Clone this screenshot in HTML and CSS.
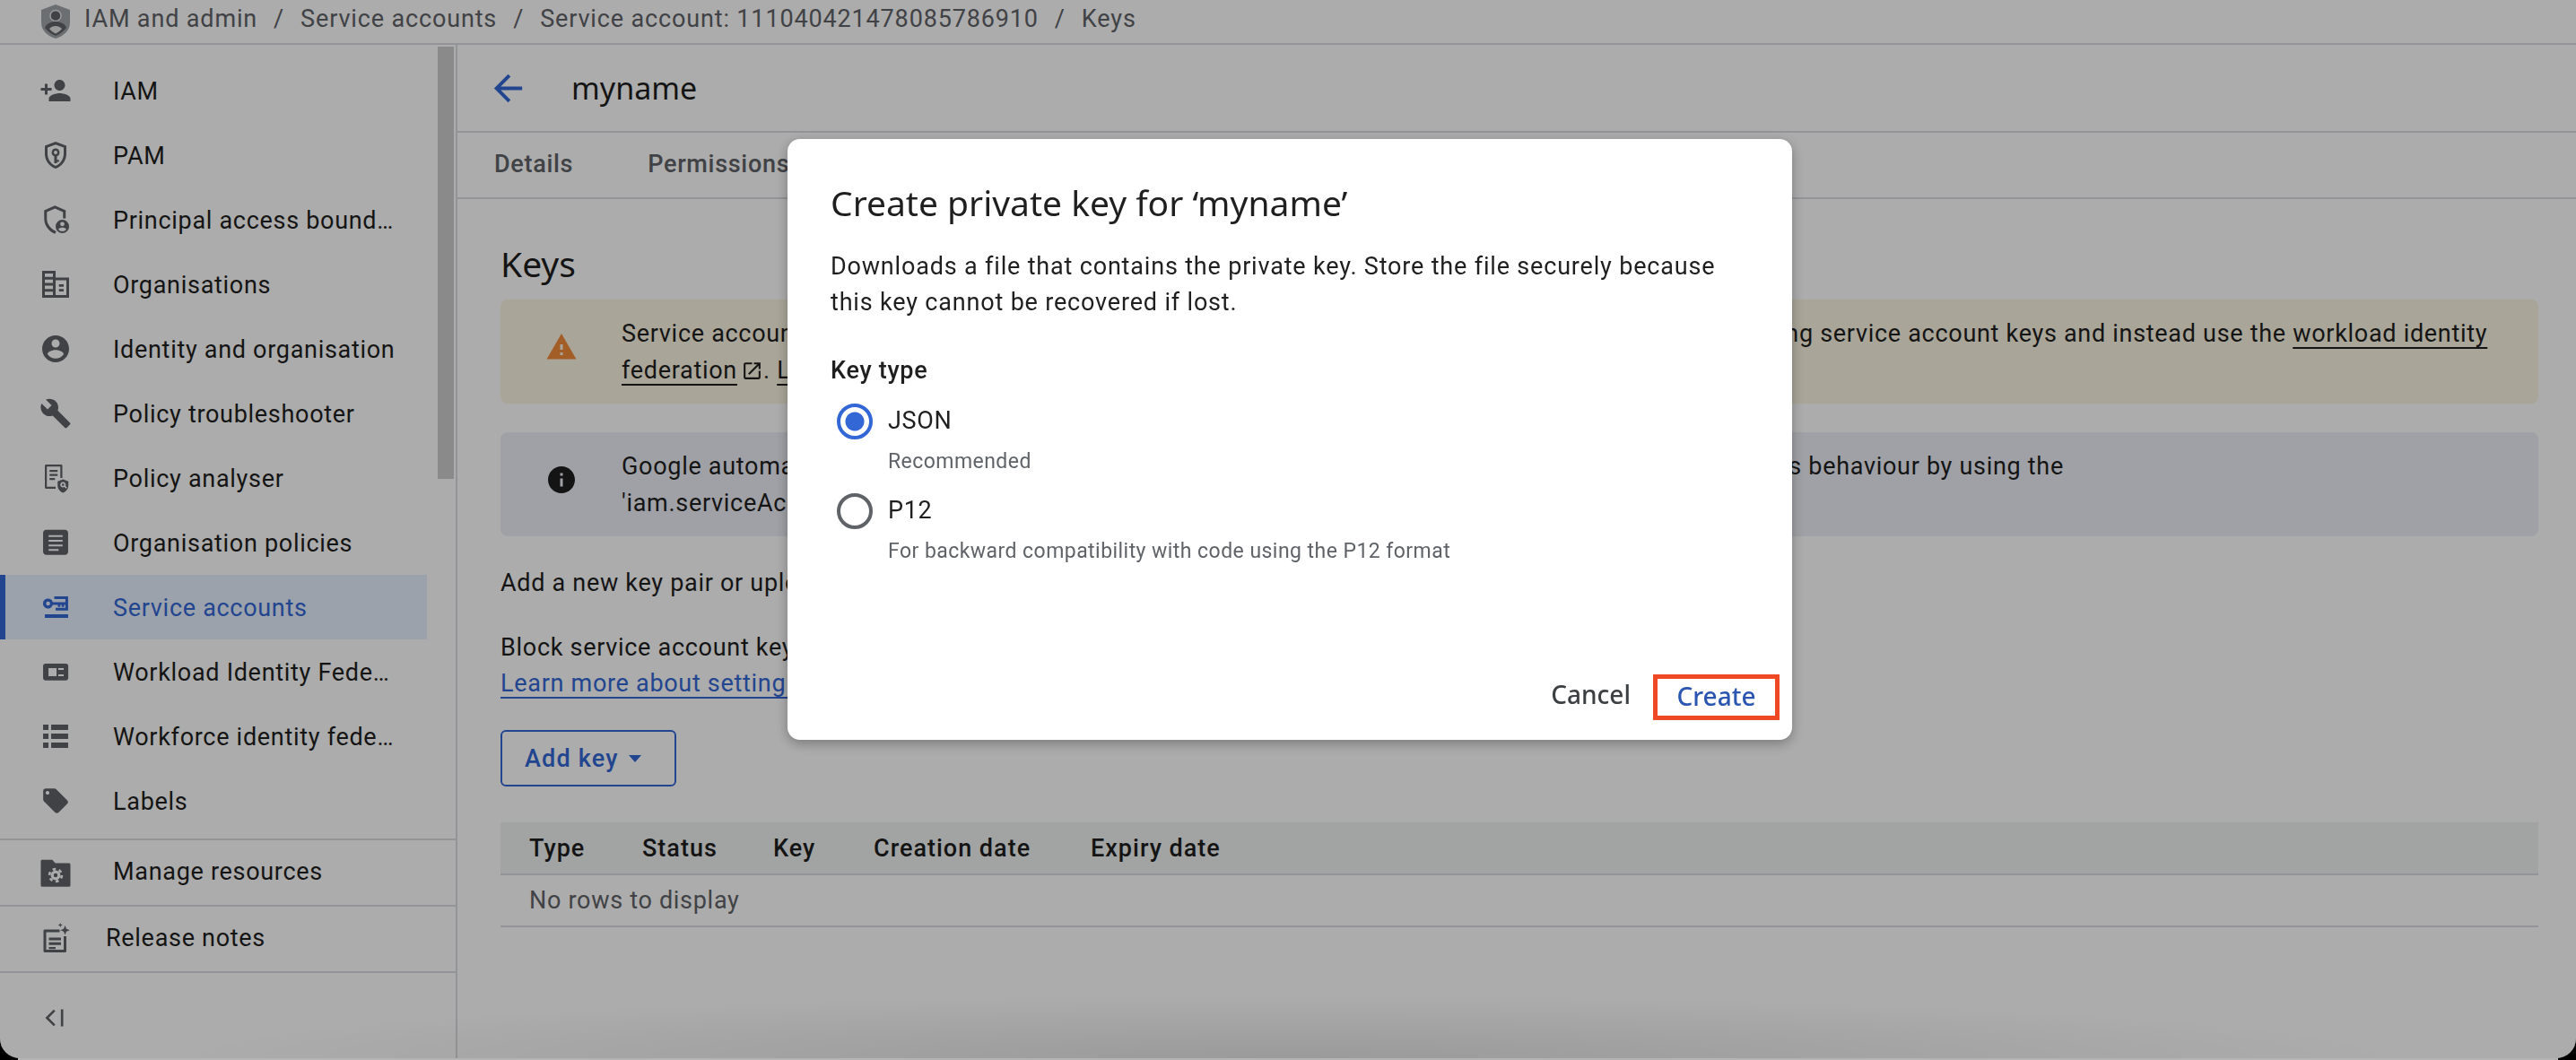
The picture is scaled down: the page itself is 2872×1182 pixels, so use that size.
FILE: index.html
```html
<!DOCTYPE html>
<html lang="en">
<head>
  <meta charset="UTF-8">
  <title>Keys | IAM and admin</title>
  <link rel="stylesheet" href="styles.css">
</head>
<body>
  <div class="app">
    <header class="crumbs">
      <svg class="crumb-logo" viewBox="0 0 32 38"><path d="M16 0 32 6v14c0 9-6.500 15-16 18C6.500 35 0 29 0 20V6z" fill="#a0a5a9"/><circle cx="16" cy="12.500" r="6" fill="#5f6368" stroke="#e4e4e4" stroke-width="1.500"/><path d="M4 26c2-5 7-7 12-7s10 2 12 7c-2.500 3.500-7 7-12 9-5-2-9.500-5.500-12-9z" fill="#5f6368"/><path d="M9 27c2-2 4.500-3 7-3s5 1 7 3c-1.500 2-4 4-7 5.500-3-1.500-5.500-3.500-7-5.500z" fill="#e4e4e4"/></svg>
      <span>IAM and admin</span><span class="crumb-sep">/</span>
      <span>Service accounts</span><span class="crumb-sep">/</span>
      <span>Service account: 111040421478085786910</span><span class="crumb-sep">/</span>
      <span>Keys</span>
    </header>

    <div class="layout">
      <aside class="sidebar">
        <nav class="nav-main">
          <a class="nav-item"><svg class="icon" viewBox="0 0 24 24"><path d="M15 12c2.210 0 4-1.790 4-4s-1.790-4-4-4-4 1.790-4 4 1.790 4 4 4zm-9-2V7H4v3H1v2h3v3h2v-3h3v-2H6zm9 4c-2.670 0-8 1.340-8 4v2h16v-2c0-2.660-5.330-4-8-4z"/></svg><span class="nav-label">IAM</span></a>
          <a class="nav-item"><svg class="icon" viewBox="0 0 24 24"><path fill-rule="evenodd" d="M12 2 4 5v6c0 5 3.400 9.500 8 11 4.600-1.500 8-6 8-11V5zm0 2.100 6 2.300V11c0 4-2.600 7.700-6 9-3.400-1.300-6-5-6-9V6.400zM12 7a3 3 0 0 0-1 5.800V18h2v-1h1.500v-1.500H13v-2.700A3 3 0 0 0 12 7zm0 1.700a1.300 1.300 0 1 1 0 2.600 1.300 1.300 0 0 1 0-2.600z"/></svg><span class="nav-label">PAM</span></a>
          <a class="nav-item"><svg class="icon" viewBox="0 0 24 24"><path d="M11.500 1.500 3.500 5v6c0 5 3 9.500 8 11.500l1-1.800C8.300 18.800 5.500 15.300 5.500 11V6.300l6-2.600 6 2.600V11h2V5z"/><path fill-rule="evenodd" d="M17 12a5 5 0 1 0 0 10 5 5 0 0 0 0-10zm0 1.600a1.600 1.600 0 1 1 0 3.200 1.600 1.600 0 0 1 0-3.200zm0 7c-1.200 0-2.300-.6-2.900-1.500.5-.8 1.800-1.200 2.900-1.200s2.400.4 2.900 1.200c-.6.900-1.700 1.500-2.900 1.500z"/></svg><span class="nav-label">Principal access boundary policies</span></a>
          <a class="nav-item"><svg class="icon" viewBox="0 0 24 24"><path fill-rule="evenodd" d="M2 2h10v5h10v15H2zm2 2v2.500h6V4zm0 4.500V11h6V8.500zm0 4.500v2.500h6V13zm0 4.500V20h6v-2.500zM12 9v11h8V9zm2.500 3h3.500v1.800h-3.500zm0 3.500h3.500v1.800h-3.500z"/></svg><span class="nav-label">Organisations</span></a>
          <a class="nav-item"><svg class="icon" viewBox="0 0 24 24"><path d="M12 2C6.480 2 2 6.480 2 12s4.480 10 10 10 10-4.480 10-10S17.520 2 12 2zm0 3c1.660 0 3 1.340 3 3s-1.340 3-3 3-3-1.340-3-3 1.340-3 3-3zm0 14.200c-2.500 0-4.710-1.280-6-3.220.03-1.990 4-3.080 6-3.080 1.990 0 5.970 1.090 6 3.080-1.290 1.940-3.500 3.220-6 3.220z"/></svg><span class="nav-label">Identity and organisation</span></a>
          <a class="nav-item"><svg class="icon" viewBox="0 0 24 24"><path d="M22.700 19l-9.100-9.100c.9-2.300.4-5-1.500-6.900-2-2-5-2.400-7.400-1.300L9 6 6 9 1.600 4.700C.4 7.100.9 10.100 2.900 12.100c1.900 1.900 4.600 2.400 6.900 1.500l9.100 9.100c.4.4 1 .4 1.400 0l2.300-2.300c.5-.4.5-1.100.1-1.400z"/></svg><span class="nav-label">Policy troubleshooter</span></a>
          <a class="nav-item"><svg class="icon" viewBox="0 0 24 24"><path fill-rule="evenodd" d="M5 2h11c.6 0 1 .4 1 1v9h-1.500V3.500h-10v15H12V20H5c-.6 0-1-.4-1-1V3c0-.6.4-1 1-1zm2.500 4h6v1.500h-6zm0 3h6v1.500h-6zm0 3h4v1.500h-4zm10 1 4 1.500v3c0 2.500-1.700 4.600-4 5.500-2.300-.9-4-3-4-5.500v-3zm0 2a2 2 0 1 0 1 3.700l1.200 1.200.8-.8-1.200-1.200a2 2 0 0 0-1.800-2.900zm0 1.100a.9.900 0 1 1 0 1.800.9.900 0 0 1 0-1.800z"/></svg><span class="nav-label">Policy analyser</span></a>
          <a class="nav-item"><svg class="icon" viewBox="0 0 24 24"><path fill-rule="evenodd" d="M5 2.500h14c1.200 0 2.300 1 2.300 2.300v14c0 1.200-1 2.300-2.300 2.300H5c-1.200 0-2.300-1-2.300-2.300v-14c0-1.200 1-2.300 2.300-2.300zm1.800 4v1.300h10.400V6.500zm0 3.500v1.300h10.400V10zm0 3.500v1.300h10.400v-1.300zm0 3.400v1.300h7.400v-1.300z"/></svg><span class="nav-label">Organisation policies</span></a>
          <a class="nav-item nav-item-active"><svg class="icon" viewBox="0 0 24 24"><path fill-rule="evenodd" d="M6.400 5.600a3.700 3.700 0 0 1 3.500 2.700h9.400V6H11V4h10.300v10.500H12v-2h7.300v-2.200h-1v1.500h-1.800v-1.500h-1v1.500h-1.800v-1.500H9.900a3.700 3.700 0 1 1-3.500-4.700zm0 2.200a1.500 1.500 0 1 0 0 3 1.500 1.500 0 0 0 0-3zM4 17.300h17.300V20H4z"/></svg><span class="nav-label">Service accounts</span></a>
          <a class="nav-item"><svg class="icon" viewBox="0 0 24 24"><path fill-rule="evenodd" d="M4.500 6h15.200c1 0 1.700.8 1.700 1.700v9c0 1-.8 1.800-1.700 1.800H4.500c-1 0-1.800-.8-1.800-1.800v-9C2.700 6.800 3.500 6 4.500 6zm2.200 3.300v6h6v-6zm7.300 0v1.300h4V9.300zm0 4.700v1.300h4V14z"/></svg><span class="nav-label">Workload Identity Federation</span></a>
          <a class="nav-item"><svg class="icon" viewBox="0 0 24 24"><path d="M2.700 3.300h4v4h-4zm6 0h12.600v4H8.700zM2.700 10h4v4h-4zm6 0h12.600v4H8.700zm-6 6.600h4v4h-4zm6 0h12.600v4H8.700z"/></svg><span class="nav-label">Workforce identity federation</span></a>
          <a class="nav-item"><svg class="icon" viewBox="-1 -1 26 26"><path d="M21.410 11.580l-9-9C12.050 2.220 11.550 2 11 2H4c-1.100 0-2 .9-2 2v7c0 .55.22 1.050.59 1.420l9 9c.36.36.86.58 1.410.58s1.050-.22 1.410-.59l7-7c.37-.36.59-.86.59-1.410s-.23-1.060-.59-1.420zM5.500 7C4.670 7 4 6.330 4 5.500S4.670 4 5.500 4 7 4.670 7 5.500 6.330 7 5.500 7z"/></svg><span class="nav-label">Labels</span></a>
          <div class="scrollbar"></div>
        </nav>
        <div class="nav-section">
          <a class="nav-item"><svg class="icon" viewBox="0 0 24 24"><path d="M2 2.500h7.500l2.300 2.500H22c.6 0 1 .4 1 1v15.500c0 .6-.4 1-1 1H2c-.6 0-1-.4-1-1v-18c0-.6.4-1 1-1z"/><circle cx="12" cy="14" r="3.600" fill="#fff"/><circle cx="12" cy="14" r="4.600" fill="none" stroke="#fff" stroke-width="1.800" stroke-dasharray="2.400 2.420"/><circle cx="12" cy="14" r="1.500"/></svg><span class="nav-label">Manage resources</span></a>
        </div>
        <div class="nav-section">
          <a class="nav-item nav-item-notes"><svg class="icon" viewBox="0 0 24 24"><path fill-rule="evenodd" d="M4 5h11v2H5v13h13V10h2v11c0 .6-.4 1-1 1H4c-.6 0-1-.4-1-1V6c0-.6.4-1 1-1zm3 6h9v2H7zm0 3.500h9v2H7zM7 18h5v1.500H7z"/><path d="M19 2l1 2.500L22.500 5.500 20 6.500l-1 2.500-1-2.500-2.500-1L18 4.500zM15.500 0l.5 1.200 1.200.5-1.200.5-.5 1.200-.5-1.200-1.200-.5 1.200-.5z"/></svg><span class="nav-label">Release notes</span></a>
        </div>
        <div class="nav-collapse">
          <svg class="collapse-icon" viewBox="0 0 20 20"><path d="M9 3 2 10l7 7M16 2v16" fill="none" stroke="#5f6368" stroke-width="2.200"/></svg>
        </div>
      </aside>

      <main class="content">
        <div class="title-bar">
          <svg class="back-icon" viewBox="0 0 24 24"><path d="M20 11H7.830l5.590-5.590L12 4l-8 8 8 8 1.410-1.410L7.830 13H20v-2z"/></svg>
          <h1>myname</h1>
        </div>
        <div class="tabs">
          <span class="tab">Details</span>
          <span class="tab">Permissions</span>
        </div>
        <section class="keys">
          <h2>Keys</h2>
          <div class="notice notice-warn">
            <svg class="notice-icon icon-warn" viewBox="0 0 24 24"><path d="M1 21h22L12 2 1 21zm12-3h-2v-2h2v2zm0-4h-2v-4h2v4z"/></svg>
            <p>Service account keys may pose a security risk if compromised. We recommend you to avoid downloading service account keys and instead use the <u>workload identity</u><br><u>federation</u><svg class="ext-icon" viewBox="0 0 24 24"><path d="M19 19H5V5h7V3H5c-1.110 0-2 .9-2 2v14c0 1.100.89 2 2 2h14c1.100 0 2-.9 2-2v-7h-2v7zM14 3v2h3.590l-9.830 9.830 1.410 1.410L19 6.410V10h2V3h-7z"/></svg>. <u>Learn more about the best way to authenticate service accounts</u> on Google Cloud.</p>
          </div>
          <div class="notice notice-info">
            <svg class="notice-icon" viewBox="0 0 24 24"><path d="M12 2C6.480 2 2 6.480 2 12s4.480 10 10 10 10-4.480 10-10S17.520 2 12 2zm1 15h-2v-6h2v6zm0-8h-2V7h2v2z"/></svg>
            <p>Google automatically disables service account keys found in public repositories. You can customise this behaviour by using the<br>'iam.serviceAccountKeyExposureResponse' organisation policy. Learn more.</p>
          </div>
          <p class="para">Add a new key pair or upload a public key certificate from an existing key pair.</p>
          <p class="para">Block service account key creation using organisation policies.<br><a class="link">Learn more about setting organisation policies for service accounts</a></p>
          <button class="add-key">Add key<span class="caret"></span></button>
          <div class="keys-table">
            <div class="keys-head">
              <span>Type</span><span>Status</span><span>Key</span><span>Creation date</span><span>Expiry date</span>
            </div>
            <div class="keys-empty">No rows to display</div>
          </div>
        </section>
      </main>
    </div>
  </div>

  <div class="scrim">
    <div class="dialog">
      <h3>Create private key for ‘myname’</h3>
      <p class="dialog-desc">Downloads a file that contains the private key. Store the file securely because this key cannot be recovered if lost.</p>
      <div class="field-label">Key type</div>
      <div class="radio-row">
        <span class="radio radio-on"></span>
        <div>
          <div class="radio-name">JSON</div>
          <div class="radio-hint">Recommended</div>
        </div>
      </div>
      <div class="radio-row">
        <span class="radio"></span>
        <div>
          <div class="radio-name">P12</div>
          <div class="radio-hint">For backward compatibility with code using the P12 format</div>
        </div>
      </div>
      <div class="dialog-actions">
        <button class="btn-cancel">Cancel</button>
        <button class="btn-create">Create</button>
      </div>
    </div>
  </div>
</body>
</html>
```

FILE: styles.css
```css
* {
  box-sizing: border-box;
}
html,
body {
  margin: 0;
  height: 100%;
  overflow: hidden;
}
body {
  background: linear-gradient(90deg, #000 20px, #b4b4b4 20px, #b4b4b4 calc(100% - 20px), #000 calc(100% - 20px));
  font-family: Roboto, "Liberation Sans", sans-serif;
  font-size: 27px;
  letter-spacing: .7px;
  color: #1f1f1f;
}
.app {
  height: 1180px;
  background: #fff;
  border-radius: 0 0 22px 22px;
  overflow: hidden;
}

/* breadcrumb */
.crumbs {
  display: flex;
  align-items: center;
  height: 50px;
  padding: 0 0 6px 46px;
  border-bottom: 2px solid #dadce0;
  color: #5f6368;
  letter-spacing: .85px;
  white-space: nowrap;
}
.crumb-logo {
  width: 32px;
  height: 38px;
  margin: 6px 16px 0 0;
}
.crumb-sep {
  margin: 0 18px;
}

.layout {
  display: flex;
  height: 1130px;
}

/* sidebar */
.sidebar {
  width: 510px;
  flex: none;
  display: flex;
  flex-direction: column;
  border-right: 2px solid #dadce0;
}
.nav-main {
  position: relative;
  padding: 15px 0 8px;
  height: 887px;
  border-bottom: 2px solid #dadce0;
}
.nav-main .nav-label {
  padding-top: 2px;
}
.nav-section {
  height: 74px;
  border-bottom: 2px solid #dadce0;
}
.nav-section .nav-label {
  padding-bottom: 3px;
}
.nav-item {
  display: flex;
  align-items: center;
  gap: 46px;
  width: 476px;
  height: 72px;
  padding-left: 44px;
  color: #1f1f1f;
}
.nav-item-active {
  background: #e8f0fe;
  box-shadow: inset 6px 0 0 #3367d6;
  color: #3367d6;
}
.nav-item-active .icon {
  fill: #3367d6;
}
.nav-item-notes {
  gap: 38px;
}
.nav-label {
  flex: 1;
  padding-right: 34px;
  overflow: hidden;
  white-space: nowrap;
  text-overflow: ellipsis;
}
.icon {
  width: 36px;
  height: 36px;
  flex: none;
  fill: #5f6368;
}
.scrollbar {
  position: absolute;
  top: 2px;
  left: 488px;
  width: 18px;
  height: 482px;
  background: #cdcdcd;
}
.nav-collapse {
  padding: 38px 0 0 50px;
}
.collapse-icon {
  display: block;
  width: 24px;
  height: 24px;
}

/* main column */
.content {
  flex: 1;
  min-width: 0;
}
.title-bar {
  display: flex;
  align-items: center;
  height: 98px;
  padding-left: 33px;
  border-bottom: 2px solid #dadce0;
}
.back-icon {
  width: 47px;
  height: 47px;
  fill: #3367d6;
}
.title-bar h1 {
  margin: 0 0 0 47px;
  font-family: "Noto Sans", sans-serif;
  font-size: 34px;
  font-weight: 400;
  letter-spacing: 0;
}
.tabs {
  display: flex;
  align-items: center;
  gap: 83px;
  height: 74px;
  padding: 0 0 2px 41px;
  border-bottom: 2px solid #dadce0;
}
.tab {
  color: #5f6368;
  font-weight: 500;
}
.keys {
  padding: 0 42px 0 48px;
}
.keys h2 {
  margin: 0;
  height: 112px;
  line-height: 143px;
  font-family: "Noto Sans", sans-serif;
  font-size: 39px;
  font-weight: 400;
  letter-spacing: 0;
}
.notice {
  display: flex;
  height: 116px;
  margin-bottom: 32px;
  border-radius: 8px;
}
.notice p {
  margin: 0;
  padding-top: 18px;
  line-height: 40.500px;
  white-space: nowrap;
}
.notice-warn {
  background: #fbf5e2;
}
.notice-info {
  background: #edeff6;
}
.notice-icon {
  width: 36px;
  height: 36px;
  flex: none;
  margin: 35px 49px 0 50px;
  fill: #1f1f1f;
}
.icon-warn {
  fill: #f28c3c;
}
.notice u {
  text-decoration-thickness: 2px;
  text-underline-offset: 6px;
}
.ext-icon {
  width: 25px;
  height: 25px;
  margin-left: 4px;
  vertical-align: -4px;
  fill: #1f1f1f;
}
.para {
  margin: 0 0 32px;
  line-height: 40px;
  white-space: nowrap;
}
.link {
  color: #3367d6;
  text-decoration: underline;
  text-decoration-thickness: 2px;
  text-underline-offset: 6px;
}
.add-key {
  display: flex;
  align-items: center;
  width: 196px;
  height: 63px;
  padding: 0 0 0 25px;
  background: none;
  border: 2px solid #3367d6;
  border-radius: 6px;
  color: #3367d6;
  font: 500 27px Roboto, sans-serif;
  letter-spacing: 1.2px;
}
.caret {
  margin-left: 11px;
  border: 7px solid transparent;
  border-top: 8px solid #3367d6;
  border-bottom: 0;
}
.keys-table {
  margin-top: 40px;
}
.keys-head {
  display: grid;
  grid-template-columns: 126px 146px 112px 242px auto;
  align-items: center;
  height: 59px;
  padding-left: 32px;
  background: #f1f3f4;
  border-bottom: 2px solid #dadce0;
  font-weight: 500;
  letter-spacing: 1px;
}
.keys-empty {
  height: 58px;
  padding-left: 32px;
  line-height: 56px;
  color: #5f6368;
  border-bottom: 2px solid #dadce0;
}

/* dialog */
.scrim {
  position: fixed;
  inset: 0 0 2px;
  border-radius: 0 0 22px 22px;
  background:
    radial-gradient(ellipse 1250px 70px at 50% 100%, rgba(0, 0, 0, .1), transparent),
    rgba(0, 0, 0, .325);
}
.dialog {
  position: absolute;
  left: 878px;
  top: 155px;
  display: flex;
  flex-direction: column;
  width: 1120px;
  height: 670px;
  padding: 0 14px 22px 48px;
  background: #fff;
  border-radius: 14px;
  box-shadow: 0 4px 14px rgba(0, 0, 0, .3);
}
.dialog h3 {
  margin: 46px 0 0;
  font-family: "Noto Sans", sans-serif;
  font-size: 39px;
  font-weight: 400;
  line-height: 50px;
  letter-spacing: 0;
}
.dialog-desc {
  margin: 26px 0 0;
  width: 1020px;
  line-height: 40px;
  letter-spacing: .82px;
}
.field-label {
  margin-top: 36px;
  line-height: 40px;
  font-weight: 500;
}
.radio-row {
  display: flex;
  gap: 17px;
  height: 100px;
  padding-left: 7px;
  margin-top: 1px;
}
.radio-row + .radio-row {
  margin-top: 0;
}
.radio {
  width: 40px;
  height: 40px;
  flex: none;
  margin-top: 16px;
  border: 4px solid #5f6368;
  border-radius: 50%;
}
.radio-on {
  border-color: #3367d6;
  background: radial-gradient(circle, #3367d6 0 10px, transparent 11px);
}
.radio-name {
  margin-top: 16px;
  line-height: 38px;
}
.radio-hint {
  margin-top: 12px;
  color: #5f6368;
  font-size: 23px;
  letter-spacing: .45px;
  line-height: 30px;
}
.dialog-actions {
  display: flex;
  align-items: center;
  justify-content: flex-end;
  gap: 25px;
  margin-top: auto;
}
.dialog-actions button {
  padding: 0 0 8px;
  background: none;
  font-family: "Noto Sans", sans-serif;
  font-size: 28px;
  font-weight: 500;
}
.btn-cancel {
  border: 0;
  color: #3c4043;
}
.btn-create {
  width: 141px;
  height: 51px;
  border: 5px solid #ee4824;
  color: #2a55b0;
}
```
